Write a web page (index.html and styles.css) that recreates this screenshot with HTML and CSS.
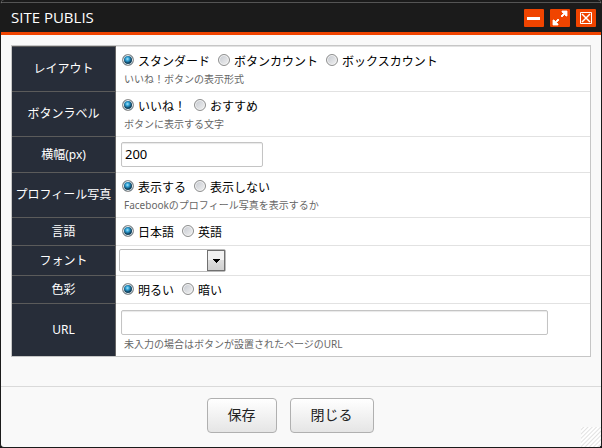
FILE: index.html
```html
<!DOCTYPE html>
<html lang="ja">
<head>
<meta charset="utf-8">
<title>SITE PUBLIS</title>
<link rel="stylesheet" href="styles.css">
</head>
<body>
<form class="dialog">
  <header class="titlebar">
    <h1 class="title">SITE PUBLIS</h1>
    <div class="tools">
      <button class="tool" type="button" aria-label="最小化">
        <svg width="20" height="18" viewBox="0 0 20 18" shape-rendering="crispEdges"><path d="M3 8h13v3H3z" fill="#fff"/></svg>
      </button>
      <button class="tool" type="button" aria-label="最大化">
        <svg width="20" height="18" viewBox="0 0 20 18"><path d="M12 2h5v5h-1l-1.500-1.500L12 8l-1-1 2.500-2.500L12 3zM3 11h1l1.500 1.500L8 10l1 1-2.500 2.500L8 15v1H3z" fill="#fff" stroke="#fff" stroke-width=".8"/></svg>
      </button>
      <button class="tool" type="button" aria-label="ウィンドウを閉じる">
        <svg width="20" height="18" viewBox="0 0 20 18" fill="none" stroke="#fff"><path d="M4.500 3.500h11v11h-11z"/><path d="M6 5l8 8M14 5l-8 8" stroke-width="1.500"/></svg>
      </button>
    </div>
  </header>
  <main class="content">
    <table class="settings">
      <tr class="row-help first">
        <th scope="row">レイアウト</th>
        <td>
          <div class="choices">
            <label><input type="radio" name="layout" checked>スタンダード</label>
            <label><input type="radio" name="layout">ボタンカウント</label>
            <label><input type="radio" name="layout">ボックスカウント</label>
          </div>
          <p class="help">いいね！ボタンの表示形式</p>
        </td>
      </tr>
      <tr class="row-help">
        <th scope="row">ボタンラベル</th>
        <td>
          <div class="choices">
            <label><input type="radio" name="caption" checked>いいね！</label>
            <label><input type="radio" name="caption">おすすめ</label>
          </div>
          <p class="help">ボタンに表示する文字</p>
        </td>
      </tr>
      <tr class="row-width">
        <th scope="row"><label for="width">横幅(px)</label></th>
        <td><input class="field short" id="width" type="text" value="200"></td>
      </tr>
      <tr class="row-help">
        <th scope="row">プロフィール写真</th>
        <td>
          <div class="choices">
            <label><input type="radio" name="photo" checked>表示する</label>
            <label><input type="radio" name="photo">表示しない</label>
          </div>
          <p class="help">Facebookのプロフィール写真を表示するか</p>
        </td>
      </tr>
      <tr class="row-single">
        <th scope="row">言語</th>
        <td>
          <div class="choices">
            <label><input type="radio" name="language" checked>日本語</label>
            <label><input type="radio" name="language">英語</label>
          </div>
        </td>
      </tr>
      <tr class="row-font">
        <th scope="row"><label for="font">フォント</label></th>
        <td class="select-cell">
          <div class="select-wrap">
            <select id="font"><option></option></select>
            <span class="arrow"><svg width="7" height="4" viewBox="0 0 7 4" shape-rendering="crispEdges"><path d="M0 0h7v1H6v1H5v1H4v1H3V3H2V2H1V1H0z"/></svg></span>
          </div>
        </td>
      </tr>
      <tr class="row-single">
        <th scope="row">色彩</th>
        <td>
          <div class="choices">
            <label><input type="radio" name="color" checked>明るい</label>
            <label><input type="radio" name="color">暗い</label>
          </div>
        </td>
      </tr>
      <tr class="row-url">
        <th scope="row"><label for="url">URL</label></th>
        <td>
          <input class="field long" id="url" type="text">
          <p class="help">未入力の場合はボタンが設置されたページのURL</p>
        </td>
      </tr>
    </table>
  </main>
  <footer class="actions">
    <button class="action" type="submit">保存</button>
    <button class="action" type="button">閉じる</button>
    <span class="grip"></span>
  </footer>
</form>
</body>
</html>
```
FILE: styles.css
```css
* {
  box-sizing: border-box;
}

body {
  margin: 0;
  background: #1b1b1b;
  color: #000;
  font: 12px/16px "Noto Sans", "Noto Sans CJK JP", sans-serif;
}

.dialog {
  display: flex;
  flex-direction: column;
  min-height: 100vh;
  border: 1px solid #1b1b1b;
  border-top: 0;
  border-radius: 4px;
  overflow: hidden;
  background: #f9f9f9;
}

.titlebar {
  display: flex;
  align-items: center;
  justify-content: space-between;
  height: 35px;
  padding: 4px 5px 0 10px;
  border-bottom: 3px solid #f04400;
  background: linear-gradient(#1b1b1b 2px, #555 2px, #555 3px, #1b1b1b 3px);
}

.title {
  margin: 0;
  padding-bottom: 2px;
  color: #fff;
  font-family: "Open Sans", "Noto Sans CJK JP", sans-serif;
  font-size: 15px;
  font-weight: 400;
}

.tools {
  display: flex;
  gap: 6px;
}

.tool {
  display: block;
  width: 20px;
  height: 18px;
  padding: 0;
  border: 0;
  border-radius: 1px;
  background: #f04400;
}

.tool svg {
  display: block;
}

.content {
  flex: 1;
  padding: 10px 10px 28px;
}

.settings {
  width: 100%;
  border: 1px solid #c6c6c6;
  border-spacing: 0;
  background: #fff;
}

th {
  width: 104px;
  padding: 0;
  border-right: 1px solid #666;
  border-bottom: 1px solid #5b5b5b;
  background: #272d39;
  color: #fff;
  font-weight: 400;
  white-space: nowrap;
}

td {
  padding: 0 5px;
  border-bottom: 1px solid #e2e2e2;
}

tr:last-child > * {
  border-bottom: 0;
}

.row-help { height: 45px; }
.row-help.first { height: 46px; }
.row-width { height: 36px; }
.row-single { height: 28px; }
.row-font { height: 30px; }
.row-url { height: 52px; }

.row-help td {
  padding-top: 7px;
  vertical-align: top;
}

.first th { border-top: 1px solid #5b5b5b; }
.first td { border-top: 1px solid #e2e2e2; }

.row-single td {
  padding-top: 2px;
}

.choices {
  display: flex;
  gap: 8px;
  padding-left: 1px;
}

.choices label {
  display: flex;
  gap: 4px;
}

input[type="radio"] {
  appearance: none;
  width: 12px;
  height: 12px;
  margin: 0;
  border: 1px solid #8e8f8f;
  border-radius: 50%;
  background: linear-gradient(135deg, #c4c8cf, #f2f2f2);
  box-shadow: inset 0 0 0 1px #f4f4f4;
}

input[type="radio"]:checked {
  background: radial-gradient(circle at 45% 40%, #a5e6fb 0, #2a9bd0 2px, #10425f 4px);
}

.help {
  margin: 2px 0 0;
  padding-left: 3px;
  color: #666;
  font-size: 10px;
  line-height: 14px;
}

.field {
  display: block;
  height: 25px;
  padding: 0 3px 2px;
  border: 1px solid #c4c4c4;
  border-radius: 2px;
  background: #fff;
  box-shadow: inset 0 1px 1px #e8e8e8;
  color: #000;
  font: inherit;
  font-size: 13px;
}

.short { width: 142px; }
.long { width: 427px; max-width: 100%; }

.select-cell {
  padding-left: 3px;
}

.select-wrap {
  display: grid;
  width: 107px;
  height: 23px;
}

.select-wrap > * {
  grid-area: 1 / 1;
}

select {
  appearance: none;
  width: 100%;
  border: 1px solid #bbb;
  border-radius: 2px;
  background: #fff;
  font: inherit;
}

.arrow {
  display: flex;
  align-items: center;
  justify-content: center;
  justify-self: end;
  width: 18px;
  margin: 1px 1px 1px 0;
  border: 1px solid #707070;
  background: linear-gradient(#f2f2f2 50%, #ddd 50%, #d0d0d0);
  pointer-events: none;
}

.actions {
  position: relative;
  display: flex;
  justify-content: center;
  gap: 13px;
  height: 61px;
  padding: 11px 22px 0 0;
  border-top: 1px solid #dadada;
}

.action {
  height: 35px;
  padding: 0 20px 2px;
  border: 1px solid #b0b0b0;
  border-radius: 4px;
  background: linear-gradient(#fff, #e5e5e5);
  color: #222;
  font: inherit;
  font-size: 14px;
}

.grip {
  position: absolute;
  right: 0;
  bottom: 0;
  width: 20px;
  height: 20px;
  background: repeating-linear-gradient(135deg, #fff 0, #fff 1px, #e2e2e2 2px, #fff 3px);
}
```
